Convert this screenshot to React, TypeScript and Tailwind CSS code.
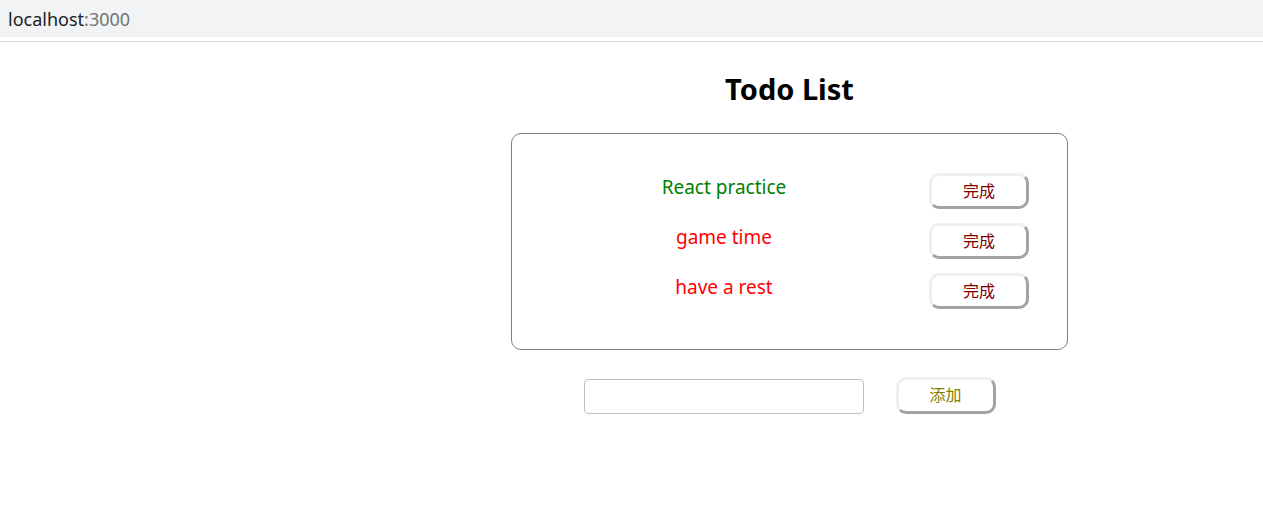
import React, { useState } from 'react';

interface Todo {
  id: number;
  text: string;
  done: boolean;
}

const initialTodos: Todo[] = [
  { id: 1, text: 'React practice', done: true },
  { id: 2, text: 'game time', done: false },
  { id: 3, text: 'have a rest', done: false },
];

const btnClass =
  'w-[100px] h-[36px] rounded-[10px] bg-white border-[3px] border-t-[#efefef] border-l-[#efefef] border-r-[#a3a3a3] border-b-[#a3a3a3] text-[16px] leading-none';

const App: React.FC = () => {
  const [todos, setTodos] = useState<Todo[]>(initialTodos);
  const [value, setValue] = useState('');

  const finish = (id: number) => {
    setTodos(todos.map(t => (t.id === id ? { ...t, done: true } : t)));
  };

  const add = () => {
    if (!value.trim()) return;
    setTodos([...todos, { id: Date.now(), text: value, done: false }]);
    setValue('');
  };

  return (
    <div className="min-h-[532px] bg-white font-['Noto_Sans','Noto_Sans_CJK_SC',sans-serif]">
      {/* address bar */}
      <div className="h-[37px] bg-[#f1f3f4] flex items-center pl-[8px] text-[18px] leading-none">
        <span className="text-[#202124]">localhost</span>
        <span className="text-[#70757a]">:3000</span>
      </div>
      <div className="h-[4px]" />
      <div className="h-[1px] bg-[#d9d9d9]" />

      <div className="ml-[511px] w-[557px] flex flex-col items-center">
        <h1 className="mt-[27px] h-[40px] text-[29px] font-bold leading-[40px] text-black">Todo List</h1>

        <div className="mt-[24px] w-full border border-[#808080] rounded-[10px] pt-[39px] pb-[40px] pl-[40px] flex flex-col gap-[14px]">
          {todos.map(todo => (
            <div key={todo.id} className="flex items-center h-[36px]">
              <span
                className={`w-[344px] pb-[7px] text-center text-[19px] leading-none ${todo.done ? 'text-[#008000]' : 'text-[#ff0000]'}`}
              >
                {todo.text}
              </span>
              <button
                onClick={() => finish(todo.id)}
                className={`${btnClass} ml-[33px] text-[#800000]`}
              >
                完成
              </button>
            </div>
          ))}
        </div>

        <div className="mt-[26px] flex items-center gap-[32px]">
          <input
            value={value}
            onChange={e => setValue(e.target.value)}
            className="w-[280px] h-[35px] mt-[3px] border border-[#c0c0c0] rounded-[4px] px-2 outline-none"
          />
          <button onClick={add} className={`${btnClass} h-[37px] text-[#808000]`}>
            添加
          </button>
        </div>
      </div>
    </div>
  );
};

export default App;
